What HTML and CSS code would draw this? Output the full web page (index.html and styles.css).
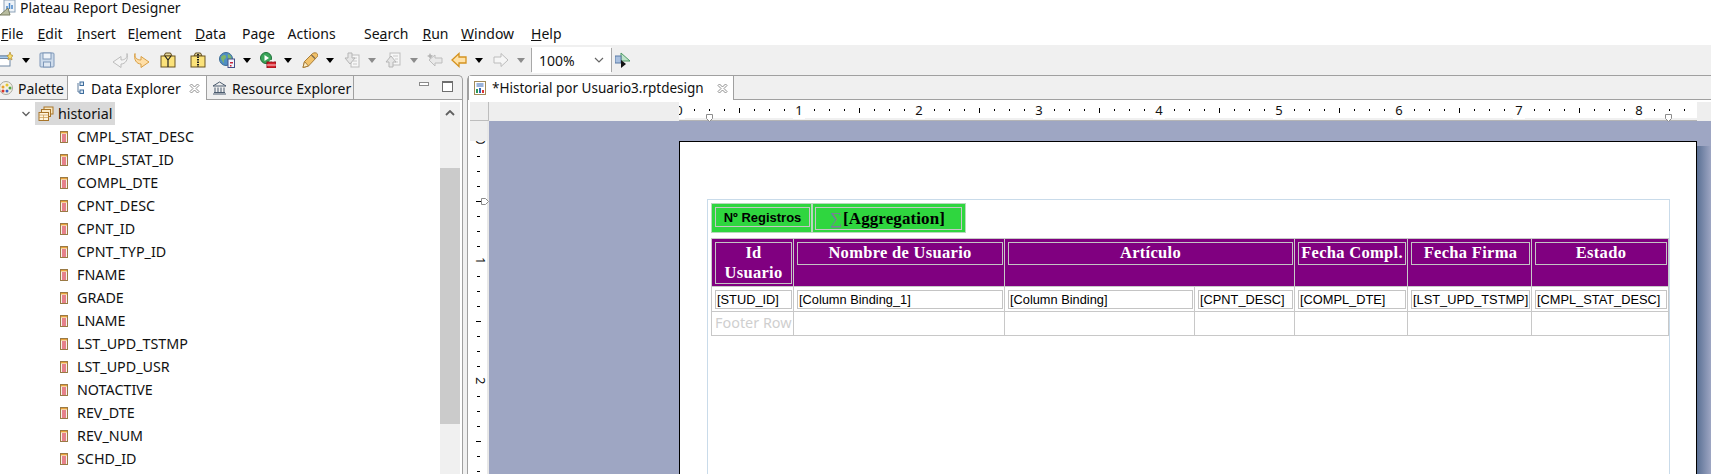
FILE: index.html
```html
<!DOCTYPE html>
<html lang="en">
<head>
<meta charset="utf-8">
<title>Plateau Report Designer</title>
<link rel="stylesheet" href="styles.css">
</head>
<body>
<svg class="defs" aria-hidden="true">
  <symbol id="field" viewBox="0 0 8 12"><rect x=".5" y=".5" width="7" height="11" fill="#f7f3e8" stroke="#9a7a45"/><rect x="1" y="1" width="6" height="1.4" fill="#e9a23b"/><path d="M2 4h4M2 6h4M2 8h4M2 10h4" stroke="#d4112f"/></symbol>
  <symbol id="close" viewBox="0 0 11 11"><path d="M1 2.500 2.500 1 5.500 4 8.500 1 10 2.500 7 5.500 10 8.500 8.500 10 5.500 7 2.500 10 1 8.500 4 5.500 1 2.500Z" fill="#fff" stroke="#8e8e8e"/></symbol>
  <symbol id="undo" viewBox="0 0 16 16"><path d="M15 1.500C15.500 6 13 8 9 8V4.500L1 10 9 15.500V12C13.500 12 16.500 7.500 15 1.500Z"/></symbol>
  <symbol id="back" viewBox="0 0 16 16"><path d="M1 8 8 1.500V5H15V11H8V14.500Z"/></symbol>
  <symbol id="fwd" viewBox="0 0 16 16"><path d="M15 8 8 1.500V5H1V11H8V14.500Z"/></symbol>
</svg>

<header class="titlebar">
  <svg class="app-icon" viewBox="0 0 16 16"><rect x="4" y="0" width="11" height="12" fill="#eef3f8" stroke="#8da2b8"/><path d="M7 9V6M9.500 9V3M12 9V5" stroke="#4a86c8" stroke-width="1.500"/><path d="M0 15 8 8 10 15Z" fill="#b9bda0" stroke="#7b7f62"/></svg>
  <span>Plateau Report Designer</span>
</header>

<nav class="menubar">
  <span><u>F</u>ile</span><span><u>E</u>dit</span><span><u>I</u>nsert</span><span>E<u>l</u>ement</span><span><u>D</u>ata</span><span>Pa<u>g</u>e</span><span>Actions</span><span>Se<u>a</u>rch</span><span><u>R</u>un</span><span><u>W</u>indow</span><span><u>H</u>elp</span>
</nav>

<div class="toolbar">
  <svg class="ic first" viewBox="0 0 16 16"><rect x="1" y="4" width="12" height="10" fill="#fff" stroke="#6f87a3"/><rect x="1" y="4" width="12" height="2.500" fill="#a7cbee" stroke="#6f87a3"/><path d="M13 0 14 3 16 3.500 14.500 5.500 15 8 13 6.500 11 8 11.500 5.500 10 3.500 12 3Z" fill="#f7dd6a" stroke="#b08a30" stroke-width=".7"/></svg>
  <i class="arrow m9"></i>
  <svg class="ic m9" viewBox="0 0 16 16"><rect x="1" y="1" width="14" height="14" rx="1" fill="#cddbeb" stroke="#7e97b8"/><rect x="4" y="1" width="8" height="6" fill="#eef3f9" stroke="#7e97b8"/><rect x="4.500" y="10" width="7" height="5" fill="#dfe8f2" stroke="#7e97b8"/></svg>
  <svg class="ic m57 off"><use href="#undo"/></svg>
  <svg class="ic m6 on flip"><use href="#undo"/></svg>
  <svg class="ic m10" viewBox="0 0 16 16"><path d="M4 4 5.500 1H10.500L12 4Z" fill="#e8d9a0" stroke="#5e4a1c"/><rect x="1" y="4" width="14" height="11" fill="#fbe27a" stroke="#6b5420"/><path d="M5 4 8 8 11 4M8 8V15" fill="none" stroke="#222" stroke-width="1.200"/></svg>
  <svg class="ic m14" viewBox="0 0 16 16"><path d="M4 4 5.500 1H10.500L12 4Z" fill="#e8d9a0" stroke="#5e4a1c"/><rect x="1" y="4" width="14" height="11" fill="#fbe27a" stroke="#6b5420"/><path d="M8 2V15" stroke="#222" stroke-width="2" stroke-dasharray="1.500 1"/></svg>
  <svg class="ic m13" viewBox="0 0 16 16"><circle cx="7" cy="7" r="6.500" fill="#4f8fc4" stroke="#3c6c96"/><path d="M2 5C5 2 7 3 7 5S4 7 5 10 2 8 2 5ZM9 2C12 3 13 6 12 8S8 6 9 2Z" fill="#7fb56a"/><rect x="9" y="7" width="6.500" height="8.500" fill="#f2f4fb" stroke="#44518a"/><path d="M11 10h3v1.500h-3zM11 13h1.500v1.500H11z" fill="#c4243c"/></svg>
  <i class="arrow m8"></i>
  <svg class="ic m9" viewBox="0 0 16 16"><circle cx="6" cy="6" r="5.500" fill="#3ba55a" stroke="#1d7038"/><path d="M4.500 3 9 6 4.500 9Z" fill="#fff"/><rect x="7" y="10" width="9" height="6" fill="#d9232e" stroke="#8e1018"/><path d="M10 10V8.500H13V10M7 13h9" fill="none" stroke="#fff" stroke-width=".8"/></svg>
  <i class="arrow m8"></i>
  <svg class="ic m10" viewBox="0 0 16 16"><path d="M1 15.500 2.500 9.500 10.500 1.500C12 .5 14.500 .5 15.500 2S15.500 4.500 14.500 5.500L6.500 14Z" fill="#f2c26a" stroke="#a87d38"/><path d="M1 15.500 2.500 9.500 6.500 14Z" fill="#fbeec8" stroke="#a87d38"/><path d="M9.500 3 13 6.500" stroke="#7b6a52" stroke-width="1.300"/></svg>
  <i class="arrow m8"></i>
  <svg class="ic m10" viewBox="0 0 16 16"><rect x="7" y="3" width="8" height="12" fill="#f7f7f7" stroke="#bdbdbd"/><path d="M9 6h4M9 9h4M9 12h4" stroke="#c9c9c9"/><path d="M4 1H8V6H11L6 12 1 6H4Z" fill="#e6e6e6" stroke="#b5b5b5"/></svg>
  <i class="arrow dim m8"></i>
  <svg class="ic m9" viewBox="0 0 16 16"><rect x="5" y="1" width="10" height="12" fill="#f7f7f7" stroke="#bdbdbd"/><path d="M8 4h5M10 7h3M10 10h3" stroke="#c9c9c9"/><path d="M4 15H8V10H11L6 4 1 10H4Z" fill="#e6e6e6" stroke="#b5b5b5"/></svg>
  <i class="arrow dim m9"></i>
  <svg class="ic m9" viewBox="0 0 16 16"><path d="M2 8 8 3V6H15V11H8V14Z" fill="#e9e9e9" stroke="#bdbdbd"/><path d="M3 1 4 3 6 3.500 4.500 5 3 7 2 5 0 4 2 3Z" fill="#b5b5b5"/></svg>
  <svg class="ic m8 nav-on"><use href="#back"/></svg>
  <i class="arrow m8"></i>
  <svg class="ic m10 nav-off"><use href="#fwd"/></svg>
  <i class="arrow dim m8"></i>
  <i class="tool-sep m6"></i>
  <div class="combo"><span>100%</span><svg class="combo-chev" viewBox="0 0 10 6"><path d="M1 1 5 5 9 1" fill="none" stroke="#666" stroke-width="1.200"/></svg></div>
  <i class="tool-sep"></i>
  <svg class="ic m3" viewBox="0 0 16 16"><path d="M6 1 15 9H6Z" fill="#bfe3c9" stroke="#4e9a66"/><rect x="0" y="4" width="6" height="7" fill="#a9c0df" stroke="#5a7aa5"/><path d="M6 8V16L11 12Z" fill="#111"/></svg>
</div>

<main class="workbench">
  <section class="panel left">
    <div class="tabs">
      <div class="tab palette">
        <svg class="tab-ic" viewBox="0 0 14 14"><circle cx="6" cy="7" r="6.500" fill="#f3f0e4" stroke="#a8a8a0"/><circle cx="3" cy="6" r="1.500" fill="#e8a02e"/><circle cx="7" cy="4" r="1.500" fill="#e2c530"/><circle cx="10" cy="7" r="1.500" fill="#55a747"/><circle cx="3" cy="10" r="1.500" fill="#d8342c"/><circle cx="7" cy="10" r="1.500" fill="#3a62c0"/></svg>
        <span>Palette</span>
      </div>
      <div class="tab active data">
        <svg class="tab-ic" viewBox="0 0 7 14"><path d="M1 2V11H4" fill="none" stroke="#5d7a9c"/><rect x="3" y="1" width="3.500" height="3.500" fill="#dce8f4" stroke="#3e6d9c"/><rect x="3" y="9" width="3.500" height="3.500" fill="#dce8f4" stroke="#3e6d9c"/></svg>
        <span>Data Explorer</span>
        <svg class="close"><use href="#close"/></svg>
      </div>
      <div class="tab resource">
        <svg class="tab-ic wide" viewBox="0 0 15 14"><path d="M1 5 7.500 1 14 5ZM1 13H14M2 11.500H13" fill="none" stroke="#4b5b6e"/><path d="M3 6.500V11M6 6.500V11M9 6.500V11M12 6.500V11" stroke="#4b5b6e"/></svg>
        <span>Resource Explorer</span>
      </div>
      <div class="view-btns">
        <i class="min"></i>
        <i class="max"></i>
      </div>
    </div>
    <div class="tree-wrap">
      <ul class="tree">
        <li class="root">
          <svg class="chev" viewBox="0 0 8 6"><path d="M.5 1 4 4.500 7.500 1" fill="none" stroke="#5f5f5f" stroke-width="1.300"/></svg>
          <span class="sel">
            <svg class="ds" viewBox="0 0 16 16"><rect x="6" y="1" width="9" height="7" fill="#f8e7c0" stroke="#a87428"/><rect x="3.500" y="3.500" width="9" height="7" fill="#fbeccb" stroke="#a87428"/><rect x="1" y="6.500" width="9.500" height="8" fill="#fff5dd" stroke="#a87428"/><path d="M1 9H10.500M1 11.500H10.500M5.500 9V14" stroke="#c99a50" stroke-width=".7"/></svg>
            historial
          </span>
        </li>
        <li><svg class="fd"><use href="#field"/></svg>CMPL_STAT_DESC</li>
        <li><svg class="fd"><use href="#field"/></svg>CMPL_STAT_ID</li>
        <li><svg class="fd"><use href="#field"/></svg>COMPL_DTE</li>
        <li><svg class="fd"><use href="#field"/></svg>CPNT_DESC</li>
        <li><svg class="fd"><use href="#field"/></svg>CPNT_ID</li>
        <li><svg class="fd"><use href="#field"/></svg>CPNT_TYP_ID</li>
        <li><svg class="fd"><use href="#field"/></svg>FNAME</li>
        <li><svg class="fd"><use href="#field"/></svg>GRADE</li>
        <li><svg class="fd"><use href="#field"/></svg>LNAME</li>
        <li><svg class="fd"><use href="#field"/></svg>LST_UPD_TSTMP</li>
        <li><svg class="fd"><use href="#field"/></svg>LST_UPD_USR</li>
        <li><svg class="fd"><use href="#field"/></svg>NOTACTIVE</li>
        <li><svg class="fd"><use href="#field"/></svg>REV_DTE</li>
        <li><svg class="fd"><use href="#field"/></svg>REV_NUM</li>
        <li><svg class="fd"><use href="#field"/></svg>SCHD_ID</li>
      </ul>
      <div class="scrollbar">
        <svg class="scroll-up" viewBox="0 0 10 6"><path d="M1 5 5 1 9 5" fill="none" stroke="#606060" stroke-width="1.800"/></svg>
        <div class="thumb"></div>
      </div>
    </div>
  </section>

  <section class="panel right">
    <div class="tabs">
      <div class="tab active editor-tab">
        <svg class="tab-ic doc" viewBox="0 0 12 14"><rect x=".5" y=".5" width="11" height="13" fill="#fff" stroke="#a08a5a"/><path d="M2.500 3h7M2.500 5h7" stroke="#3566b5"/><path d="M3 12V8" stroke="#2a9a58" stroke-width="2"/><path d="M6 12V7" stroke="#3566b5" stroke-width="2"/><path d="M9 12V9" stroke="#d33" stroke-width="2"/></svg>
        <span class="editor-title">*Historial por Usuario3.rptdesign</span>
        <svg class="close"><use href="#close"/></svg>
      </div>
    </div>
    <div class="editor">
      <div class="ruler-top">
        <div class="corner"></div>
        <div class="ruler-gap"></div>
        <div class="hruler"><span>0</span><span>1</span><span>2</span><span>3</span><span>4</span><span>5</span><span>6</span><span>7</span><span>8</span></div>
        <div class="ruler-end"></div>
        <svg class="marker mk-left" viewBox="0 0 7 8"><path d="M.5.500H6.500V4.500L3.500 7.500.500 4.500Z" fill="#fff" stroke="#8c8c8c"/></svg>
        <svg class="marker mk-right" viewBox="0 0 7 8"><path d="M.5.500H6.500V4.500L3.500 7.500.500 4.500Z" fill="#fff" stroke="#8c8c8c"/></svg>
      </div>
      <div class="editor-body">
        <div class="vruler">
          <div class="vcorner"></div>
          <div class="vticks"><span>0</span><span>1</span><span>2</span></div>
          <svg class="marker mk-top" viewBox="0 0 8 7"><path d="M.5.500H4.500L7.500 3.500 4.500 6.500H.5Z" fill="#fff" stroke="#8c8c8c"/></svg>
        </div>
        <div class="canvas">
          <div class="page">
            <div class="container">
              <div class="agg">
                <div class="agg-cell first-cell"><div class="agg-box sans">Nº Registros</div></div>
                <div class="agg-cell"><div class="agg-box tall"><span class="sigma">∑</span><span class="agg-val">[Aggregation]</span></div></div>
              </div>
              <table class="report">
                <colgroup>
                  <col class="c1"><col class="c2"><col class="c3"><col class="c4"><col class="c5"><col class="c6"><col class="c7">
                </colgroup>
                <tr class="head">
                  <th><div class="box">Id<br>Usuario</div></th>
                  <th><div class="box">Nombre de Usuario</div></th>
                  <th colspan="2"><div class="box">Artículo</div></th>
                  <th><div class="box">Fecha Compl.</div></th>
                  <th><div class="box">Fecha Firma</div></th>
                  <th><div class="box">Estado</div></th>
                </tr>
                <tr class="data">
                  <td><div class="box">[STUD_ID]</div></td>
                  <td><div class="box">[Column Binding_1]</div></td>
                  <td><div class="box">[Column Binding]</div></td>
                  <td><div class="box">[CPNT_DESC]</div></td>
                  <td><div class="box">[COMPL_DTE]</div></td>
                  <td><div class="box">[LST_UPD_TSTMP]</div></td>
                  <td><div class="box">[CMPL_STAT_DESC]</div></td>
                </tr>
                <tr class="foot">
                  <td>Footer Row</td><td></td><td></td><td></td><td></td><td></td><td></td>
                </tr>
              </table>
            </div>
          </div>
          <div class="page-shadow"></div>
        </div>
      </div>
    </div>
  </section>
</main>
</body>
</html>
```
FILE: styles.css
```css
* { box-sizing: border-box; }
html, body { margin: 0; padding: 0; }
body {
  width: 1711px;
  height: 474px;
  overflow: hidden;
  display: flex;
  flex-direction: column;
  background: #fff;
  color: #111;
  font-family: "Noto Sans", "Open Sans", sans-serif;
  font-size: 14px;
}
.defs { position: absolute; width: 0; height: 0; }

.titlebar { height: 22px; display: flex; align-items: center; flex: none; font-size: 14px; padding-bottom: 7px; }
.app-icon { width: 16px; height: 16px; margin: 0 4px 0 0; flex: none; }

.menubar {
  height: 23px;
  flex: none;
  display: grid;
  grid-template-columns: 36.500px 39.500px 50.500px 67.500px 47px 45.500px 76.500px 58.500px 38.500px 70px 40px;
  padding-left: 1px;
  align-items: center;
  font-size: 14px;
}

.toolbar { height: 30px; flex: none; background: #f0f0f0; display: flex; align-items: center; }
.ic { width: 16px; height: 16px; flex: none; }
.first { margin-left: -3px; }
.arrow { width: 8px; height: 0; flex: none; border: 4px solid transparent; border-top: 5px solid #000; border-bottom: 0; }
.arrow.dim { border-top-color: #8c8c8c; }
.m3 { margin-left: 3px; } .m6 { margin-left: 6px; } .m8 { margin-left: 8px; } .m9 { margin-left: 9px; }
.m10 { margin-left: 10px; } .m13 { margin-left: 13px; } .m14 { margin-left: 14px; } .m57 { margin-left: 57px; }
.off { fill: #f4f4f4; stroke: #bcbcbc; }
.on { fill: #ffdfa8; stroke: #d89f45; }
.flip { transform: scaleX(-1); }
.nav-on { fill: #ffe2a8; stroke: #d4921f; stroke-width: 1.300; }
.nav-off { fill: #f6f6f6; stroke: #bcbcbc; }
.tool-sep { width: 1px; height: 24px; background: #a8a8a8; flex: none; }
.combo { width: 79px; height: 26px; background: #fff; display: flex; align-items: center; justify-content: space-between; padding: 0 7px; flex: none; font-size: 14px; }
.combo-chev { width: 10px; height: 6px; }

.workbench { flex: 1; min-height: 0; display: flex; gap: 4px; background: #f0f0f0; }
.panel { display: flex; flex-direction: column; min-height: 0; }
.panel.left { width: 463px; flex: none; border-right: 1px solid #a0a0a0; border-top: 1px solid #a0a0a0; border-top-right-radius: 5px; }
.panel.right { flex: 1; min-width: 0; border-left: 1px solid #a0a0a0; border-top: 1px solid #a0a0a0; border-top-left-radius: 5px; }

.tabs { height: 24px; flex: none; display: flex; align-items: stretch; border-bottom: 1px solid #a0a0a0; font-size: 14px; position: relative; }
.tab { display: flex; align-items: center; height: 24px; flex: none; }
.tab.active { background: #fff; border-right: 1px solid #a0a0a0; border-left: 1px solid #a0a0a0; }
.tab-ic { width: 14px; height: 14px; flex: none; }
.palette { width: 67px; }
.palette .tab-ic { margin-right: 4px; }
.data { width: 140px; padding-left: 9px; }
.data .tab-ic { width: 7px; margin-right: 7px; }
.data .close { margin-left: 8px; }
.resource { width: 147px; padding-left: 5px; border-right: 1px solid #a0a0a0; }
.resource .tab-ic { width: 15px; margin-right: 5px; }
.close { width: 11px; height: 11px; flex: none; }
.view-btns { flex: 1; display: flex; align-items: flex-start; padding: 5px 0 0 65px; gap: 13px; }
.min { width: 10px; height: 4px; border: 1px solid #8a8a8a; background: #fff; margin-top: 1px; }
.max { width: 11px; height: 11px; border: 1px solid #6e6e6e; border-top-width: 2px; background: #fff; }
.editor-tab { width: 266px; padding-left: 5px; border-left: 0; }
.editor-tab .doc { width: 12px; margin-right: 6px; }
.editor-title { width: 216px; flex: none; font-size: 13.500px; white-space: nowrap; }
.editor-tab .close { margin-left: 9px; }

.tree-wrap { flex: 1; min-height: 0; display: flex; background: #fff; padding: 2px 2px 0 0; overflow: hidden; }
.tree { flex: 1; list-style: none; margin: 0; padding: 0; }
.tree li { height: 23px; display: flex; align-items: center; padding-left: 60px; white-space: nowrap; font-size: 14.300px; }
.tree .root { padding-left: 22px; }
.chev { width: 8px; height: 6px; margin-right: 5px; flex: none; }
.sel { display: flex; align-items: center; background: #d9d9d9; height: 23px; width: 80px; padding-left: 3px; }
.ds { width: 16px; height: 16px; margin-right: 4px; flex: none; }
.fd { width: 8px; height: 12px; margin-right: 9px; flex: none; }
.scrollbar { width: 20px; flex: none; background: #f0f0f0; display: flex; flex-direction: column; align-items: center; }
.scroll-up { width: 10px; height: 6px; margin-top: 8px; flex: none; }
.thumb { width: 100%; height: 256px; background: #cbcbcb; margin-top: 52px; flex: none; }

.editor { flex: 1; min-height: 0; background: #fff; padding: 2px 0 0 2px; display: flex; flex-direction: column; overflow: hidden; }
.ruler-top { height: 19px; flex: none; display: flex; position: relative; }
.corner { width: 18px; flex: none; background: #eee; border-bottom: 1px solid #bdbdbd; }
.ruler-gap { width: 191px; flex: none; background: #eee; border-left: 1px solid #bdbdbd; }
.hruler {
  width: 1018px;
  flex: none;
  display: flex;
  overflow: hidden;
  font-size: 13px;
  line-height: 16px;
  border-bottom: 1px solid #b4b4b4;
  box-shadow: inset 0 -2px 0 #f0f0f0;
  background-color: #fff;
  background-image: linear-gradient(90deg, #000 1px, transparent 1px), linear-gradient(90deg, #000 1px, transparent 1px);
  background-size: 15px 2px, 60px 5px;
  background-repeat: repeat-x;
  background-position: 0 7px, 0 6px;
}
.hruler span { flex: none; width: 12px; margin-right: 108px; height: 17px; background: #fff; text-align: center; }
.hruler span:first-child { margin-left: -6px; }
.ruler-end { flex: 1; background: #eee; }
.marker { position: absolute; }
.mk-left { width: 7px; height: 8px; left: 236px; top: 12px; }
.mk-right { width: 7px; height: 8px; left: 1195px; top: 12px; }

.editor-body { flex: 1; min-height: 0; display: flex; }
.vruler { width: 19px; flex: none; display: flex; flex-direction: column; position: relative; border-right: 2px solid #e8e8e8; }
.vcorner { height: 20px; flex: none; background: #eee; }
.vticks {
  flex: 1;
  display: flex;
  flex-direction: column;
  overflow: hidden;
  font-size: 13px;
  line-height: 12px;
  background-color: #fff;
  background-image: linear-gradient(#000 1px, transparent 1px), linear-gradient(#000 1px, transparent 1px);
  background-size: 3px 15px, 5px 60px;
  background-repeat: repeat-y;
  background-position: 7px 0, 6px 0;
}
.vticks span { flex: none; height: 12px; width: 12px; margin: 0 0 108px 5px; background: #fff; writing-mode: vertical-rl; text-align: center; }
.vticks span:first-child { margin-top: -6px; }
.mk-top { width: 8px; height: 7px; left: 11px; top: 77px; }

.canvas { flex: 1; min-width: 0; background: #9ea6c3; display: flex; padding: 20px 0 0 190px; overflow: hidden; }
.page { width: 1018px; flex: none; background: #fff; border: 1px solid #000; border-bottom: 0; padding: 57px 0 0 27px; height: 400px; }
.page-shadow { width: 14px; flex: none; margin-top: 5px; background: linear-gradient(90deg, #5a7094, #9ea6c3); }

.container { width: 963px; height: 300px; border: 1px solid #c9dbea; border-bottom: 0; padding: 3px; }
.agg { display: flex; width: 255px; height: 30px; background: #2fd63f; border: 1px solid #b8d8bc; }
.agg-cell { flex: none; width: 153px; padding: 3px 0 0 2px; }
.first-cell { width: 101px; border-right: 2px solid #b8d8bc; padding-left: 3px; }
.agg-box { border: 1px solid #c6c6c6; height: 20px; width: 95px; display: flex; align-items: center; justify-content: center; }
.sans { font: bold 13px "Liberation Sans", Arial, sans-serif; color: #000; }
.tall { height: 23px; width: 147px; font: bold 17px "Liberation Serif", "Times New Roman", serif; color: #000; justify-content: flex-start; padding-left: 14px; }
.sigma { color: #7c7c9c; font-weight: normal; font-size: 17px; width: 13px; flex: none; }
.agg-val { letter-spacing: .1px; }

.report { margin-top: 5px; width: 958px; table-layout: fixed; border-collapse: separate; border-spacing: 0; border-left: 1px solid #c8c8c8; border-top: 1px solid #c8c8c8; }
.c1 { width: 82px; } .c2 { width: 211px; } .c3 { width: 190px; } .c4 { width: 100px; } .c5 { width: 113px; } .c6 { width: 124px; } .c7 { width: 137px; }
.report th, .report td { padding: 3px 1px 0 3px; border-right: 1px solid #c8c8c8; border-bottom: 1px solid #c8c8c8; vertical-align: top; overflow: hidden; white-space: nowrap; }
.box { border: 1px solid #c4c4c4; }
.head th { height: 48px; background: #800080; color: #fff; font: bold 16.500px/20px "Liberation Serif", "Times New Roman", serif; text-align: center; letter-spacing: .3px; }
.head th .box { height: 23px; line-height: 20px; }
.head th:first-child .box { height: 42px; }
.data td { height: 25px; font: 12.800px/18px "Liberation Sans", Arial, sans-serif; color: #000; }
.data td .box { height: 19px; padding-left: 1px; }
.foot td { height: 24px; color: #cfcfcf; font-family: "Noto Sans", sans-serif; font-size: 14.400px; padding: 1px 0 0 3px; line-height: 20px; }
```
